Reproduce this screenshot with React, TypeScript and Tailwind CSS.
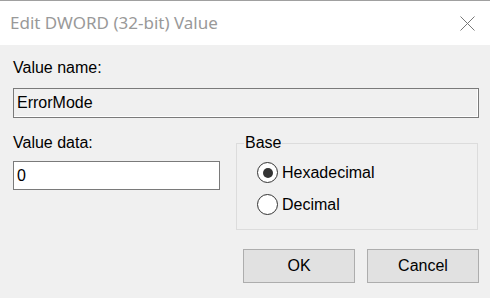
import { useState } from 'react';

export default function App() {
  const [base, setBase] = useState<'hex' | 'dec'>('hex');

  const radios: { id: 'hex' | 'dec'; label: string }[] = [
    { id: 'hex', label: 'Hexadecimal' },
    { id: 'dec', label: 'Decimal' },
  ];

  return (
    <div
      className="w-[490px] h-[298px] bg-[#f0f0f0] border-t border-[#a0a0a0] overflow-hidden text-[#000] text-[16px] leading-[18px]"
      style={{ fontFamily: '"Liberation Sans", Arial, sans-serif' }}
    >
      {/* Title bar */}
      <div className="h-[44px] bg-white flex items-center justify-between pl-[10px] pr-[15px]">
        <span
          className="text-[17px] text-[#999999] pb-[1px]"
          style={{ fontFamily: '"Noto Sans", "Open Sans", sans-serif' }}
        >
          Edit DWORD (32-bit) Value
        </span>
        <svg width="15" height="15" viewBox="0 0 15 15" className="mt-[1px]">
          <path d="M0.5 0.5L14.5 14.5M14.5 0.5L0.5 14.5" stroke="#777" strokeWidth="1" fill="none" />
        </svg>
      </div>

      {/* Body */}
      <div className="pl-[13px] pr-[11px] pt-[14px]">
        <div>Value name:</div>
        <div className="mt-[11px] h-[30px] border border-[#7a7a7a] bg-[#f0f0f0] shadow-[inset_-1px_-1px_0_#ffffff] flex items-center pl-[3px]">
          ErrorMode
        </div>

        <div className="mt-[16px] flex gap-[16px]">
          <div className="w-[207px]">
            <div>Value data:</div>
            <input
              defaultValue="0"
              className="mt-[9px] w-full h-[29px] border border-[#7a7a7a] bg-white pl-[3px] outline-none"
            />
          </div>

          <fieldset className="flex-1 mr-[1px] border border-[#dcdcdc] h-[96px]">
            <legend className="ml-[7px] px-[1px]">Base</legend>
            <div className="flex flex-col gap-[11px] pl-[20px] pt-[10px]">
              {radios.map((r) => (
                <button
                  key={r.id}
                  onClick={() => setBase(r.id)}
                  className="flex items-center gap-[4px] text-left"
                >
                  <span className="w-[21px] h-[21px] rounded-full border-[1.5px] border-[#333] bg-white flex items-center justify-center">
                    {base === r.id && <span className="w-[10px] h-[10px] rounded-full bg-[#333]" />}
                  </span>
                  <span>{r.label}</span>
                </button>
              ))}
            </div>
          </fieldset>
        </div>

        <div className="mt-[19px] flex justify-end gap-[12px]">
          <button className="w-[112px] h-[34px] bg-[#e1e1e1] border border-[#adadad]">OK</button>
          <button className="w-[112px] h-[34px] bg-[#e1e1e1] border border-[#adadad]">Cancel</button>
        </div>
      </div>
    </div>
  );
}
